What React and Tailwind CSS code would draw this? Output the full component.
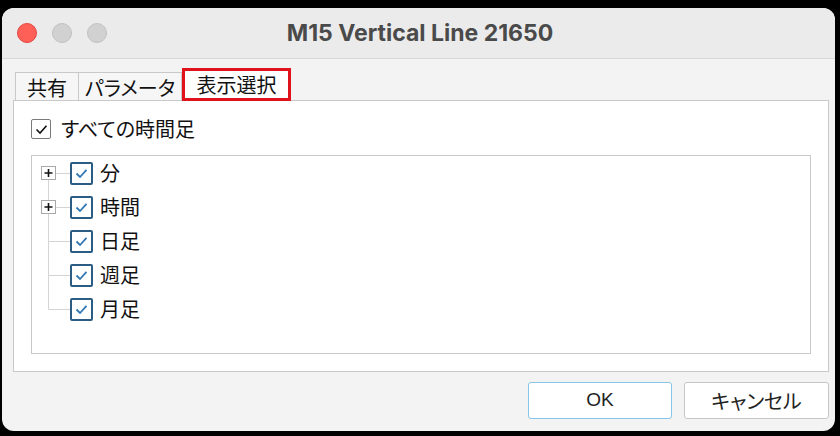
import React from 'react'

const jp = "font-['Noto_Sans_CJK_JP',sans-serif] [font-feature-settings:'palt']"

function BlueCheck() {
  return (
    <span className="w-[23px] h-[23px] shrink-0 border-2 border-[#2b5d84] rounded-[2px] bg-white flex items-center justify-center">
      <svg width="13" height="11" viewBox="0 0 13 11">
        <path d="M1.5 5.5 L5 9 L11.5 1.8" fill="none" stroke="#3278b4" strokeWidth="1.8" />
      </svg>
    </span>
  )
}

function Connector({ plus, top, bottom }) {
  const c = '#d4d4d4'
  return (
    <svg width="38" height="34" className="shrink-0">
      {top && <line x1="16.5" y1="0" x2="16.5" y2={plus ? 10.5 : 17.5} stroke={c} />}
      {bottom && <line x1="16.5" y1={plus ? 23.5 : 17.5} x2="16.5" y2="34" stroke={c} />}
      <line x1={plus ? 23 : 16.5} y1="17.5" x2="38" y2="17.5" stroke={c} />
      {plus && (
        <>
          <rect x="9.5" y="10.5" width="14" height="13" fill="white" stroke="#a9a9a9" />
          <line x1="12.5" y1="17" x2="20.5" y2="17" stroke="#111" strokeWidth="1.6" />
          <line x1="16.5" y1="13" x2="16.5" y2="21" stroke="#111" strokeWidth="1.6" />
        </>
      )}
    </svg>
  )
}

const rows = [
  { label: '分', plus: true, top: false, bottom: true },
  { label: '時間', plus: true, top: true, bottom: true },
  { label: '日足', plus: false, top: true, bottom: true },
  { label: '週足', plus: false, top: true, bottom: true },
  { label: '月足', plus: false, top: true, bottom: false },
]

export default function App() {
  return (
    <div className="w-[840px] h-[436px] bg-black pt-[8px] pl-[2px] overflow-hidden">
      <div className="w-[833px] h-[423px] rounded-[12px] bg-[#f3f3f3] flex flex-col overflow-hidden">
        {/* title bar */}
        <div className="h-[51px] shrink-0 bg-[#ebebeb] border-b border-[#d8d8d8] relative flex items-center justify-center">
          <div className="absolute left-[15px] top-[15px] flex gap-[15px]">
            <span className="w-[20px] h-[20px] rounded-full bg-[#fe5f57] border border-[#e5463f]" />
            <span className="w-[20px] h-[20px] rounded-full bg-[#d1d1d1] border border-[#c2c2c2]" />
            <span className="w-[20px] h-[20px] rounded-full bg-[#d1d1d1] border border-[#c2c2c2]" />
          </div>
          <span className="font-['Inter',sans-serif] font-bold text-[23px] text-[#4a4a4a] ml-[3px]">M15 Vertical Line 21650</span>
        </div>

        <div className={`flex-1 flex flex-col pl-[11px] pr-[6px] pt-[10px] ${jp}`}>
          {/* tabs */}
          <div className="h-[31px] flex items-end pl-[2px] relative z-10">
            <div className="w-[64px] h-[28px] border border-b-0 border-[#c9c9c9] bg-[#f6f6f6] flex items-center justify-center text-[20px] text-[#111] pt-[3px]">共有</div>
            <div className="w-[103px] h-[28px] border border-l-0 border-b-0 border-[#c9c9c9] bg-[#f6f6f6] flex items-center justify-center text-[20px] text-[#111] pt-[3px]">パラメータ</div>
            <div className="w-[109px] h-[33px] -mb-[1px] border-[3px] border-[#e0121c] bg-white flex items-center justify-center text-[20px] text-[#111]">表示選択</div>
          </div>

          {/* panel */}
          <div className="h-[272px] shrink-0 border border-[#c9c9c9] bg-white flex flex-col px-[17px] pt-[17px] pb-[17px]">
            <div className="h-[22px] flex items-center">
              <span className="w-[20px] h-[20px] border border-[#7a7a7a] rounded-[2px] bg-white flex items-center justify-center">
                <svg width="13" height="11" viewBox="0 0 13 11">
                  <path d="M1.5 5.5 L5 9 L11.5 1.8" fill="none" stroke="#111" strokeWidth="1.6" />
                </svg>
              </span>
              <span className="ml-[10px] text-[20px] text-[#111] leading-none">すべての時間足</span>
            </div>
            <div className="mt-[15px] flex-1 border border-[#c9c9c9] bg-white flex flex-col">
              {rows.map((r) => (
                <div key={r.label} className="h-[34px] flex items-center">
                  <Connector plus={r.plus} top={r.top} bottom={r.bottom} />
                  <BlueCheck />
                  <span className="ml-[7px] text-[20px] text-[#111] leading-none">{r.label}</span>
                </div>
              ))}
            </div>
          </div>

          {/* buttons */}
          <div className="mt-[10px] flex justify-end gap-[12px]">
            <button className="w-[144px] h-[37px] rounded-[3px] border border-[#86c4e8] bg-white text-[19px] text-[#222] font-['Liberation_Sans',sans-serif]">OK</button>
            <button className="w-[145px] h-[37px] rounded-[3px] border border-[#c6c6c6] bg-white text-[20px] text-[#222]">キャンセル</button>
          </div>
        </div>
      </div>
    </div>
  )
}
